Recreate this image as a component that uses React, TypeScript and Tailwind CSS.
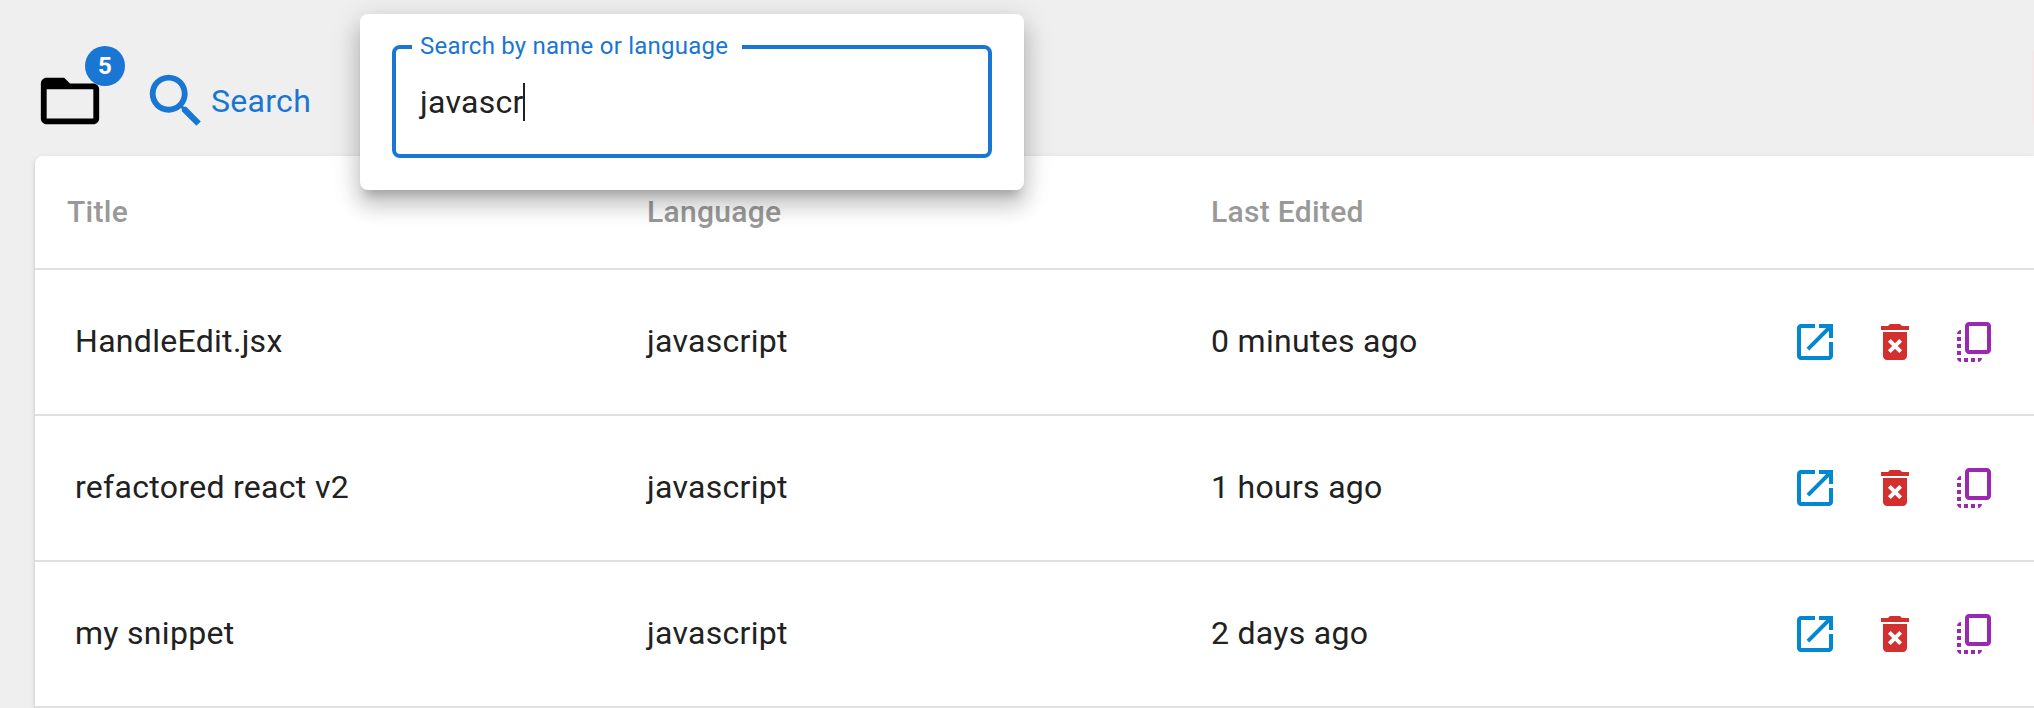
const PATHS = {
  folder:
    'M20 6h-8l-2-2H4c-1.1 0-1.99.9-1.99 2L2 18c0 1.1.9 2 2 2h16c1.1 0 2-.9 2-2V8c0-1.1-.9-2-2-2zm0 12H4V8h16v10z',
  search:
    'M15.5 14h-.79l-.28-.27C15.41 12.59 16 11.11 16 9.5 16 5.91 13.09 3 9.5 3S3 5.91 3 9.5 5.91 16 9.5 16c1.61 0 3.09-.59 4.23-1.57l.27.28v.79l5 4.99L20.49 19l-4.99-5zm-6 0C7.01 14 5 11.99 5 9.5S7.01 5 9.5 5 14 7.01 14 9.5 11.99 14 9.5 14z',
  open: 'M19 19H5V5h7V3H5c-1.11 0-2 .9-2 2v14c0 1.1.89 2 2 2h14c1.1 0 2-.9 2-2v-7h-2v7zM14 3v2h3.59l-9.83 9.83 1.41 1.41L19 6.41V10h2V3h-7z',
  remove:
    'M6 19c0 1.1.9 2 2 2h8c1.1 0 2-.9 2-2V7H6v12zm2.46-7.12l1.41-1.41L12 12.59l2.12-2.12 1.41 1.41L13.41 14l2.12 2.12-1.41 1.41L12 15.41l-2.12 2.12-1.41-1.41L10.59 14l-2.13-2.12zM15.5 4l-1-1h-5l-1 1H5v2h14V4z',
  copy: 'M18 2H9c-1.1 0-2 .9-2 2v12c0 1.1.9 2 2 2h9c1.1 0 2-.9 2-2V4c0-1.1-.9-2-2-2zm0 14H9V4h9v12zM3 15v-2h2v2H3zm0-5.5h2v2H3v-2zM10 20h2v2h-2v-2zm-7-1.5v-2h2v2H3zM5 22c-1.1 0-2-.9-2-2h2v2zm3.5 0h-2v-2h2v2zm5 0v-2h2c0 1.1-.9 2-2 2zM5 6v2H3c0-1.1.9-2 2-2z',
};

function Icon({ name, className }: { name: keyof typeof PATHS; className: string }) {
  return (
    <svg viewBox="0 0 24 24" fill="currentColor" className={`block shrink-0 ${className}`}>
      <path d={PATHS[name]} />
    </svg>
  );
}

const rows = [
  { title: 'HandleEdit.jsx', language: 'javascript', edited: '0 minutes ago' },
  { title: 'refactored react v2', language: 'javascript', edited: '1 hours ago' },
  { title: 'my snippet', language: 'javascript', edited: '2 days ago' },
];

function Toolbar() {
  return (
    <header className="flex h-[156px] items-start pl-[35px] pt-[66px]">
      <div className="relative">
        <Icon name="folder" className="size-[70px] text-black" />
        <span className="absolute -top-5 left-[50px] flex size-10 items-center justify-center rounded-full bg-[#1976d2] pb-px text-[24px] font-bold leading-none text-white">
          5
        </span>
      </div>
      <button className="ml-9 flex h-[70px] items-center text-[#1976d2]">
        <Icon name="search" className="size-[70px]" />
        <span className="pb-px text-[32px] leading-[48px] tracking-[0.3px]">Search</span>
      </button>
      <div className="-mt-4 ml-auto h-[75px] w-0.5 rounded-l-lg bg-[#f3e9ea] shadow-[0_2px_6px_rgba(0,0,0,0.02)]" />
    </header>
  );
}

function SearchPopover() {
  return (
    <div className="absolute left-[360px] top-[14px] h-[176px] w-[664px] rounded-lg bg-white px-8 pt-[31px] shadow-[0_10px_10px_-6px_rgba(0,0,0,0.2),0_16px_20px_2px_rgba(0,0,0,0.14),0_6px_28px_4px_rgba(0,0,0,0.12)]">
      <div className="relative flex h-[113px] items-start rounded-lg border-4 border-[#1976d2] pl-6 pt-[30px]">
        <label className="absolute -top-[19px] left-4 w-[330px] bg-white pl-2 text-[24px] leading-[32px] tracking-[0.225px] text-[#1976d2]">
          Search by name or language
        </label>
        <span className="text-[32px] leading-[46px] tracking-[0.3px]">javascr</span>
        <span className="-ml-px mt-1 h-[38px] w-0.5 bg-[#212121]" />
      </div>
    </div>
  );
}

const GRID = 'grid grid-cols-[580px_564px_1fr_auto] items-center border-b-2 border-[#e0e0e0]';

export default function App() {
  return (
    <div className="relative h-[708px] w-full overflow-hidden bg-[#efefef] font-['Roboto',sans-serif] text-[#212121]">
      <Toolbar />
      <main className="ml-[35px] h-[552px] rounded-tl-lg bg-white shadow-[0_4px_2px_-2px_rgba(0,0,0,0.2),0_2px_2px_rgba(0,0,0,0.14),0_2px_6px_rgba(0,0,0,0.12)]">
        <div className={`${GRID} h-[114px] pb-0.5 pl-8 text-[30px] font-medium tracking-[0.3px] text-[#999999]`}>
          <span>Title</span>
          <span>Language</span>
          <span>Last Edited</span>
        </div>
        {rows.map((row) => (
          <div key={row.title} className={`${GRID} h-[146px] pl-8 text-[32px] tracking-[0.3px]`}>
            <span className="pb-0.5 pl-2">{row.title}</span>
            <span className="pb-0.5">{row.language}</span>
            <span className="pb-0.5">{row.edited}</span>
            <div className="flex gap-8 pr-[35px]">
              <Icon name="open" className="size-12 text-[#0288d1]" />
              <Icon name="remove" className="size-12 text-[#d32f2f]" />
              <Icon name="copy" className="size-12 text-[#9c27b0]" />
            </div>
          </div>
        ))}
      </main>
      <SearchPopover />
    </div>
  );
}
